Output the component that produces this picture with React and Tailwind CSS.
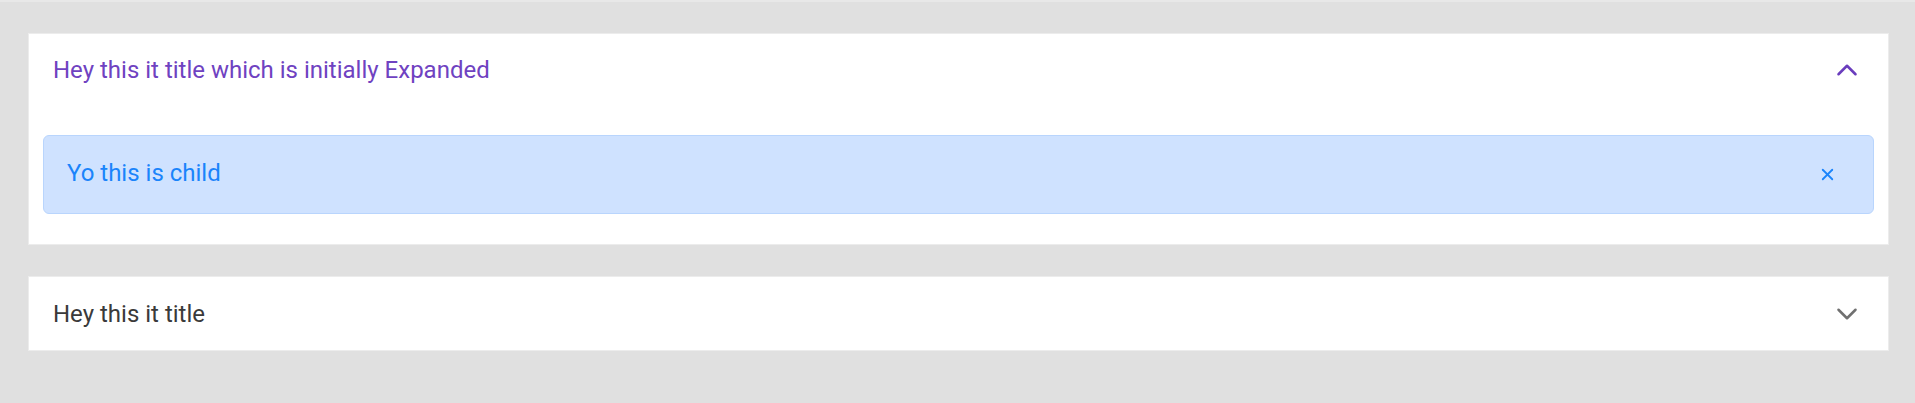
import React, { useState } from 'react'
import { ChevronUp, ChevronDown, X } from 'lucide-react'

function Panel({ title, expanded, onToggle, children }) {
  return (
    <div className="bg-white border border-[#ececec]">
      <button
        onClick={onToggle}
        className={`w-full h-[73px] flex items-center justify-between pl-[24px] pr-[24px] text-left ${expanded ? 'pb-[2px]' : 'pb-0'}`}
      >
        <span className={`text-[24px] leading-none ${expanded ? 'text-[#6f42c1]' : 'text-[#3a3a3a]'}`}>
          {title}
        </span>
        {expanded ? (
          <ChevronUp size={34} strokeWidth={1.8} className="text-[#6a3dbd]" />
        ) : (
          <ChevronDown size={34} strokeWidth={1.8} className="text-[#707070]" />
        )}
      </button>
      {expanded && <div className="px-[14px] pt-[28px] pb-[30px]">{children}</div>}
    </div>
  )
}

export default function App() {
  const [open, setOpen] = useState({ a: true, b: false })
  const [showChild, setShowChild] = useState(true)

  return (
    <div className="min-h-[403px] bg-[#e0e0e0] font-['Roboto',sans-serif]">
      <div className="h-[2px] bg-[#e8e8e8]" />
      <div className="flex flex-col gap-[31px] pt-[31px] pl-[28px] pr-[26px]">
        <Panel
          title="Hey this it title which is initially Expanded"
          expanded={open.a}
          onToggle={() => setOpen({ ...open, a: !open.a })}
        >
          {showChild && (
            <div className="h-[79px] flex items-center justify-between rounded-[6px] border border-[#b9d5fd] bg-[#cfe2ff] pl-[23px] pr-[36px]">
              <span className="text-[24px] leading-none text-[#1a84fb] pb-[4px]">Yo this is child</span>
              <button onClick={() => setShowChild(false)} className="text-[#1a84fb]">
                <X size={19} strokeWidth={2.3} />
              </button>
            </div>
          )}
        </Panel>
        <Panel
          title="Hey this it title"
          expanded={open.b}
          onToggle={() => setOpen({ ...open, b: !open.b })}
        >
          <div className="text-[24px] text-[#3a3a3a]">Content</div>
        </Panel>
      </div>
    </div>
  )
}
